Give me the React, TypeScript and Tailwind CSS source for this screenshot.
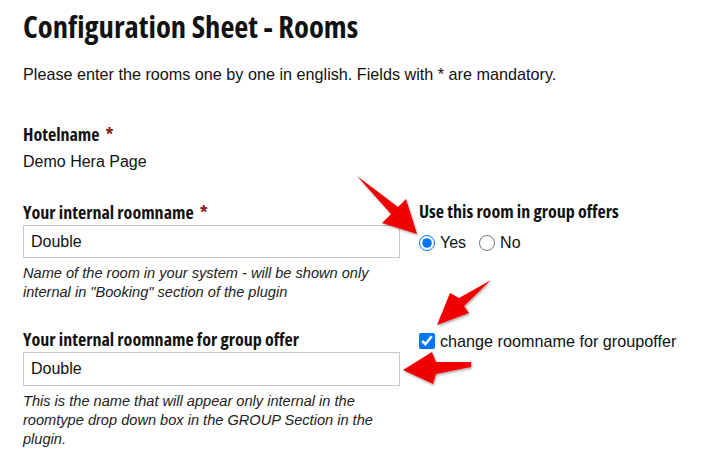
import React from 'react'

const heading = "font-['Open_Sans',sans-serif] font-bold [font-stretch:75%] text-[#111]"
const body = "font-['Liberation_Sans',Arial,sans-serif]"

const Star = () => <span className="text-[#8b1a1a] ml-[6px]">*</span>

const Arrows: React.FC = () => (
  <svg className="absolute inset-0 pointer-events-none" width="708" height="464" viewBox="0 0 708 464">
    <defs>
      <filter id="sh" x="-20%" y="-20%" width="140%" height="140%">
        <feDropShadow dx="1" dy="1.5" stdDeviation="1" floodColor="#000" floodOpacity="0.35" />
      </filter>
    </defs>
    <g fill="#f00000" filter="url(#sh)">
      {/* arrow to radio */}
      <polygon points="357,176 398,207 406,199 417,234 382,223 391,214" />
      {/* arrow to checkbox */}
      <polygon points="491,280 459,298 450,293 437,325 469,313 464,306" />
      {/* arrow to group input */}
      <polygon points="471,362 436,362 432,352 403,370 433,384 436,374 471,367" />
    </g>
  </svg>
)

export default function App() {
  return (
    <div className={`relative w-[708px] h-[464px] bg-white overflow-hidden text-[#111] ${body}`}>
      <div className="pl-[23px]">
        <h1 className={`${heading} text-[30.6px] leading-[36px] pt-[8px]`}>Configuration Sheet - Rooms</h1>
        <p className="text-[16.2px] leading-[20px] mt-[20px]">
          Please enter the rooms one by one in english. Fields with * are mandatory.
        </p>

        <div className="mt-[38px]">
          <div className={`${heading} text-[18px] leading-[24px]`}>
            Hotelname<Star />
          </div>
          <div className="text-[16px] leading-[20px] mt-[6px]">Demo Hera Page</div>
        </div>

        <div className="flex gap-[19px] mt-[28px]">
          <div className="w-[377px]">
            <div className={`${heading} text-[18px] leading-[24px]`}>
              Your internal roomname<Star />
            </div>
            <div className="h-[33px] border border-[#c8c8c8] px-[7px] flex items-center text-[16px] mt-[1px]">Double</div>
            <p className="italic text-[14.6px] leading-[19px] mt-[6px] text-[#222]">
              Name of the room in your system - will be shown only internal in "Booking" section of the plugin
            </p>
          </div>
          <div className="-mt-[1px]">
            <div className={`${heading} text-[18px] leading-[24px]`}>Use this room in group offers</div>
            <div className="flex items-center mt-[8px] text-[16px]">
              <input type="radio" name="g" defaultChecked className="w-[16px] h-[16px] m-0 accent-[#0075ff]" />
              <span className="ml-[5px]">Yes</span>
              <input type="radio" name="g" className="w-[16px] h-[16px] m-0 ml-[13px]" />
              <span className="ml-[5px]">No</span>
            </div>
          </div>
        </div>

        <div className="flex gap-[19px] mt-[25px]">
          <div className="w-[377px]">
            <div className={`${heading} text-[18px] leading-[24px]`}>Your internal roomname for group offer</div>
            <div className="h-[34px] border border-[#c8c8c8] px-[7px] flex items-center text-[16px] mt-[1px]">Double</div>
            <p className="italic text-[14.6px] leading-[18.8px] mt-[6px] text-[#222] pr-[20px]">
              This is the name that will appear only internal in the roomtype drop down box in the GROUP Section in the plugin.
            </p>
          </div>
          <div className="flex items-start pt-[2px]">
            <label className="flex items-center text-[16.2px]">
              <input type="checkbox" defaultChecked className="w-[16px] h-[16px] m-0 accent-[#0075ff]" />
              <span className="ml-[5px]">change roomname for groupoffer</span>
            </label>
          </div>
        </div>
      </div>
      <Arrows />
    </div>
  )
}
